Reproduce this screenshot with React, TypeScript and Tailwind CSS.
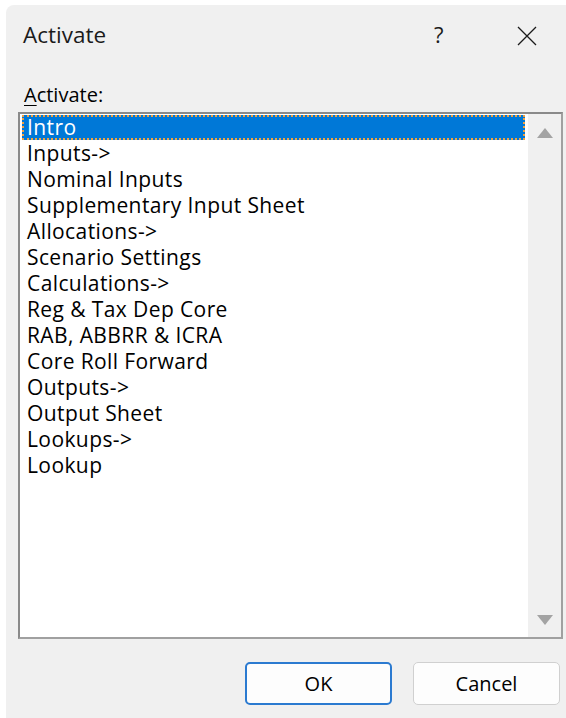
import React, { useState } from "react";

const sheets = [
  "Intro",
  "Inputs->",
  "Nominal Inputs",
  "Supplementary Input Sheet",
  "Allocations->",
  "Scenario Settings",
  "Calculations->",
  "Reg & Tax Dep Core",
  "RAB, ABBRR & ICRA",
  "Core Roll Forward",
  "Outputs->",
  "Output Sheet",
  "Lookups->",
  "Lookup",
];

function Arrow({ down }: { down?: boolean }) {
  return (
    <svg width="16" height="10" viewBox="0 0 16 10">
      <polygon
        points={down ? "0,0 16,0 8,10" : "8,0 16,10 0,10"}
        fill="#a3a3a3"
      />
    </svg>
  );
}

export default function App() {
  const [selected, setSelected] = useState(0);

  return (
    <div
      className="w-[566px] h-[718px] bg-white overflow-hidden pl-[6px] pt-[5px]"
      style={{ fontFamily: '"Open Sans", "Noto Sans", sans-serif' }}
    >
      <div className="w-[580px] h-[713px] bg-[#f0f0f0] rounded-tl-[8px] flex flex-col">
        {/* title bar */}
        <div className="h-[60px] flex items-center pl-[17px] pt-[1px] shrink-0">
          <span className="text-[22.5px] text-[#1b1b1b] flex-1 pb-[2px]">Activate</span>
          <span className="text-[22px] text-[#1b1b1b] w-[10px] mr-[73px] pb-[2px]">?</span>
          <svg width="20" height="20" viewBox="0 0 20 20" className="mr-[49px]">
            <path d="M1 1 L19 19 M19 1 L1 19" stroke="#1b1b1b" strokeWidth="1.3" />
          </svg>
        </div>

        <div className="pl-[12px] flex-1 flex flex-col">
          <div className="text-[20px] leading-[24px] text-black pl-[6px] mt-[18px] mb-[5px]">
            <span className="underline underline-offset-[3px] decoration-1">A</span>ctivate:
          </div>

          {/* sheet list */}
          <div className="w-[545px] h-[527px] bg-white border-t-2 border-l-2 border-[#8a8a8a] border-r-2 border-r-[#a0a0a0] border-b-2 border-b-[#a0a0a0] flex">
            <div className="flex-1 pt-[1px] pl-[2px]">
              {sheets.map((s, i) => (
                <div
                  key={s}
                  onClick={() => setSelected(i)}
                  className={
                    i === selected
                      ? "h-[25px] mb-[1px] mr-[3px] pl-[5px] flex items-center text-[21px] tracking-[0.4px] font-medium text-white bg-[#0078d7] outline-2 outline-dotted outline-[#f0a040] -outline-offset-2"
                      : "h-[25px] mb-[1px] pl-[5px] flex items-center text-[21px] tracking-[0.4px] font-medium text-black"
                  }
                >
                  {s}
                </div>
              ))}
            </div>
            <div className="w-[33px] bg-[#f0f0f0] flex flex-col items-center justify-between pt-[14px] pb-[12px]">
              <Arrow />
              <Arrow down />
            </div>
          </div>

          {/* buttons */}
          <div className="w-[545px] flex justify-end gap-[21px] mt-[23px] pr-[3px]">
            <button className="w-[147px] h-[43px] rounded-[5px] border-2 border-[#2b7ad0] bg-[#fdfdfd] text-[20px] text-black">
              OK
            </button>
            <button className="w-[147px] h-[43px] rounded-[5px] border border-[#d0d0d0] bg-[#fdfdfd] text-[20px] text-black">
              Cancel
            </button>
          </div>
        </div>
      </div>
    </div>
  );
}
